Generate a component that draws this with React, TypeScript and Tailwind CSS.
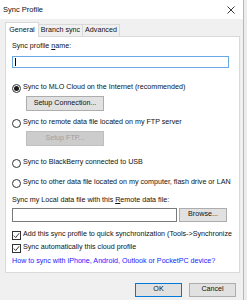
import React from "react";

const font = { fontFamily: '"Liberation Sans", Arial, sans-serif' };

function Radio({ checked }: { checked?: boolean }) {
  return (
    <span className="w-[9px] h-[9px] rounded-full border border-[#333333] bg-white flex items-center justify-center shrink-0">
      {checked && <span className="w-[5px] h-[5px] rounded-full bg-[#1a1a1a]" />}
    </span>
  );
}

function Check() {
  return (
    <span className="w-[9px] h-[9px] border border-[#333333] bg-white flex items-center justify-center shrink-0">
      <svg width="7" height="7" viewBox="0 0 7 7">
        <path d="M0.8 3.6 L2.7 5.5 L6.2 1.2" fill="none" stroke="#222" strokeWidth="0.9" />
      </svg>
    </span>
  );
}

export default function App() {
  return (
    <div className="w-[247px] h-[300px] bg-[#ececec] flex overflow-hidden text-[7.15px] text-[#111] leading-none" style={font}>
      <div className="w-[244px] h-[300px] flex flex-col bg-[#f0f0f0] border-r border-[#b8b8b8]">
        <div className="h-[19px] bg-white flex items-center justify-between pl-[3px] pr-[8px] shrink-0">
          <span className="text-[7.5px]">Sync Profile</span>
          <svg width="8" height="8" viewBox="0 0 8 8">
            <path d="M0.5 0.5 L7.5 7.5 M7.5 0.5 L0.5 7.5" stroke="#222" strokeWidth="0.9" />
          </svg>
        </div>
        <div className="flex flex-col pl-[5px] pr-[3px]">
          <div className="flex items-end h-[18px] mt-[0px] relative z-10">
            <div className="w-[34px] h-[15px] bg-white border border-[#d9d9d9] border-b-0 flex items-center justify-center pt-[1px]">
              General
            </div>
            <div className="w-[44px] h-[13px] border border-[#d9d9d9] border-l-0 border-b-0 flex items-center justify-center">
              Branch sync
            </div>
            <div className="w-[37px] h-[13px] border border-[#d9d9d9] border-l-0 border-b-0 flex items-center justify-center">
              Advanced
            </div>
          </div>
          <div className="h-[237px] bg-white border border-[#d9d9d9] -mt-[1px] flex flex-col pl-[6px] pr-[10px] overflow-hidden">
            <div className="h-[10px] mt-[5px] flex items-center">
              <span>
                Sync profile <span className="underline underline-offset-1">n</span>ame:
              </span>
            </div>
            <div className="h-[12px] mt-[4px] border border-[#6aa9e3] bg-white flex items-center pl-[2px]">
              <span className="w-[1px] h-[8px] bg-black" />
            </div>
            <div className="h-[10px] mt-[15px] flex items-center gap-[2px]">
              <Radio checked />
              <span>Sync to MLO Cloud on the Internet (recommended)</span>
            </div>
            <div className="ml-[14px] mt-[3px] w-[78px] h-[15px] bg-[#e1e1e1] border border-[#adadad] flex items-center justify-center">
              Setup Connection...
            </div>
            <div className="h-[10px] mt-[7px] flex items-center gap-[2px]">
              <Radio />
              <span>Sync to remote data file located on my FTP server</span>
            </div>
            <div className="ml-[14px] mt-[3px] w-[78px] h-[15px] bg-[#cccccc] border border-[#bfbfbf] text-[#a0a0a0] flex items-center justify-center">
              Setup FTP...
            </div>
            <div className="h-[10px] mt-[12px] flex items-center gap-[2px]">
              <Radio />
              <span>Sync to BlackBerry connected to USB</span>
            </div>
            <div className="h-[10px] mt-[10px] flex items-center gap-[2px]">
              <Radio />
              <span className="whitespace-nowrap">Sync to other data file located on my computer, flash drive or LAN</span>
            </div>
            <div className="h-[10px] mt-[8px] flex items-center">
              <span>
                Sync my Local data file with this <span className="underline underline-offset-1">R</span>emote data file:
              </span>
            </div>
            <div className="h-[14px] mt-[2px] flex">
              <div className="w-[165px] h-[14px] border border-[#7a7a7a] bg-white" />
              <div className="ml-[2px] w-[48px] h-[14px] bg-[#e1e1e1] border border-[#adadad] flex items-center justify-center">
                Browse...
              </div>
            </div>
            <div className="h-[10px] mt-[8px] flex items-center gap-[2px] -mr-[8px]">
              <Check />
              <span className="whitespace-nowrap">Add this sync profile to quick synchronization (Tools-&gt;Synchronize</span>
            </div>
            <div className="h-[10px] mt-[3px] flex items-center gap-[2px]">
              <Check />
              <span>Sync automatically this cloud profile</span>
            </div>
            <div className="h-[10px] mt-[4px] flex items-center text-[#1a1aff] whitespace-nowrap">
              How to sync with iPhone, Android, Outlook or PocketPC device?
            </div>
          </div>
          <div className="flex justify-end gap-[7px] mt-[10px] pr-[4px]">
            <div className="w-[47px] h-[14px] bg-[#e1e1e1] border border-[#0078d7] flex items-center justify-center">OK</div>
            <div className="w-[47px] h-[14px] bg-[#e1e1e1] border border-[#adadad] flex items-center justify-center">Cancel</div>
          </div>
        </div>
      </div>
    </div>
  );
}
